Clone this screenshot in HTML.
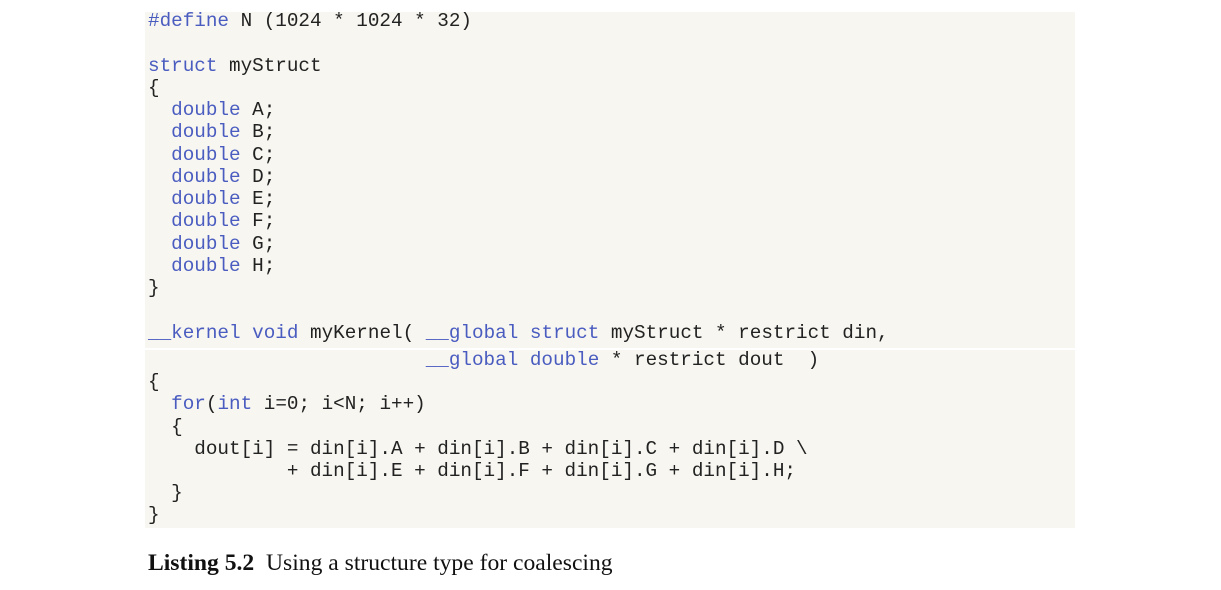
<!DOCTYPE html>
<html><head><style>
body{margin:0;width:1221px;height:590px;background:#fff;position:relative;overflow:hidden}
.bg{position:absolute;left:145px;width:930px;background:#f7f6f0}
.l{position:absolute;left:148px;font:19.3px "Liberation Mono",monospace;color:#222;white-space:pre;line-height:22px;margin-top:1px}
.k{color:#4a5cc0}
.cap{position:absolute;left:148px;top:550px;font:23.6px "Liberation Serif",serif;color:#111;white-space:pre}
</style></head><body>
<div class="bg" style="top:12px;height:336px"></div>
<div class="bg" style="top:350px;height:178px"></div>
<div class="l" style="top:9px"><span class="k">#define</span> N (1024 * 1024 * 32)</div>
<div class="l" style="top:54px"><span class="k">struct</span> myStruct</div>
<div class="l" style="top:76px">{</div>
<div class="l" style="top:98px">  <span class="k">double</span> A;</div>
<div class="l" style="top:120px">  <span class="k">double</span> B;</div>
<div class="l" style="top:143px">  <span class="k">double</span> C;</div>
<div class="l" style="top:165px">  <span class="k">double</span> D;</div>
<div class="l" style="top:187px">  <span class="k">double</span> E;</div>
<div class="l" style="top:209px">  <span class="k">double</span> F;</div>
<div class="l" style="top:232px">  <span class="k">double</span> G;</div>
<div class="l" style="top:254px">  <span class="k">double</span> H;</div>
<div class="l" style="top:276px">}</div>
<div class="l" style="top:321px"><span class="k">__kernel</span> <span class="k">void</span> myKernel( <span class="k">__global</span> <span class="k">struct</span> myStruct * restrict din,</div>
<div class="l" style="top:348px">                        <span class="k">__global</span> <span class="k">double</span> * restrict dout  )</div>
<div class="l" style="top:370px">{</div>
<div class="l" style="top:392px">  <span class="k">for</span>(<span class="k">int</span> i=0; i&lt;N; i++)</div>
<div class="l" style="top:415px">  {</div>
<div class="l" style="top:437px">    dout[i] = din[i].A + din[i].B + din[i].C + din[i].D \</div>
<div class="l" style="top:459px">            + din[i].E + din[i].F + din[i].G + din[i].H;</div>
<div class="l" style="top:481px">  }</div>
<div class="l" style="top:503px">}</div>
<div class="cap"><b>Listing 5.2</b>  Using a structure type for coalescing</div>
</body></html>
